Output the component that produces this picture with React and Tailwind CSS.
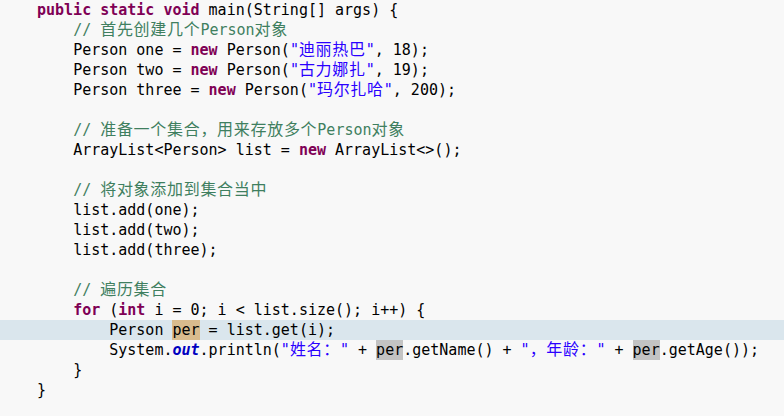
import React from "react";

const K = ({ children }) => <span className="font-bold text-[#7f0055]">{children}</span>;
const S = ({ children }) => <span className="text-[#2a00ff]">{children}</span>;
const C = ({ children }) => <span className="text-[#3f7f5f]">{children}</span>;
const Z = ({ children }) => (
  <span className="text-[16px] leading-[10px] tracking-[0.7px]" style={{ fontFamily: '"Noto Sans CJK SC", sans-serif' }}>{children}</span>
);

const Line = ({ children, hl }) => (
  <div className={"h-5 leading-5 pl-[37px] whitespace-pre " + (hl ? "bg-[#dae6ed]" : "")}>{children || " "}</div>
);

export default function App() {
  return (
    <div
      className="w-[784px] h-[416px] bg-[#f8f8f8] text-[#000000] text-[15px] overflow-hidden"
      style={{ fontFamily: '"DejaVu Sans Mono", "Noto Sans CJK SC", monospace' }}
    >
      <Line><K>public</K> <K>static</K> <K>void</K> main(String[] args) {"{"}</Line>
      <Line>{"    "}<C>// <Z>首先创建几个</Z>Person<Z>对象</Z></C></Line>
      <Line>{"    "}Person one = <K>new</K> Person(<S>"<Z>迪丽热巴</Z>"</S>, 18);</Line>
      <Line>{"    "}Person two = <K>new</K> Person(<S>"<Z>古力娜扎</Z>"</S>, 19);</Line>
      <Line>{"    "}Person three = <K>new</K> Person(<S>"<Z>玛尔扎哈</Z>"</S>, 200);</Line>
      <Line />
      <Line>{"    "}<C>// <Z>准备一个集合，用来存放多个</Z>Person<Z>对象</Z></C></Line>
      <Line>{"    "}ArrayList&lt;Person&gt; list = <K>new</K> ArrayList&lt;&gt;();</Line>
      <Line />
      <Line>{"    "}<C>// <Z>将对象添加到集合当中</Z></C></Line>
      <Line>{"    "}list.add(one);</Line>
      <Line>{"    "}list.add(two);</Line>
      <Line>{"    "}list.add(three);</Line>
      <Line />
      <Line>{"    "}<C>// <Z>遍历集合</Z></C></Line>
      <Line>{"    "}<K>for</K> (<K>int</K> i = 0; i &lt; list.size(); i++) {"{"}</Line>
      <Line hl>{"        "}Person <span className="inline-block h-5 bg-[#d9bb8d]">per</span> = list.get(i);</Line>
      <Line>
        {"        "}System.<span className="font-bold italic text-[#0000c0]">out</span>.println(<S>"<Z>姓名：</Z>"</S> + <span className="inline-block h-5 bg-[#c3c3c3]">per</span>.getName() + <S>"<Z>，年龄：</Z>"</S> + <span className="inline-block h-5 bg-[#c3c3c3]">per</span>.getAge());
      </Line>
      <Line>{"    "}{"}"}</Line>
      <Line>{"}"}</Line>
    </div>
  );
}
